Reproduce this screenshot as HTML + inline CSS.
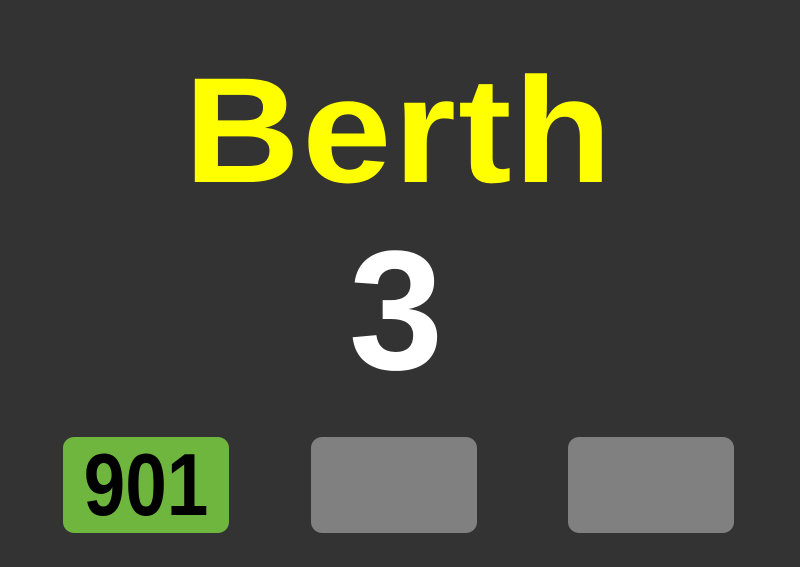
<!DOCTYPE html>
<html><head><style>
body{margin:0;width:800px;height:567px;background:#333;overflow:hidden;position:relative;font-family:"Liberation Sans",sans-serif}
.t{position:absolute;left:0;width:800px;text-align:center;font-weight:bold}
.b{position:absolute;top:437px;width:166px;height:96px;border-radius:11px;background:#808080}
</style></head><body>
<div class="t" style="top:55px;font-size:150px;line-height:150px;color:#ffff00;letter-spacing:2px;transform:scaleX(1.07);left:-1px">Berth</div>
<div class="t" style="top:226px;font-size:170px;line-height:170px;color:#fff;left:-4px">3</div>
<div class="b" style="left:63px;background:#6fb63e"><div style="position:absolute;left:0;width:166px;top:4px;text-align:center;font-weight:bold;font-size:88px;line-height:88px;color:#000;transform:scaleX(0.85)">901</div></div>
<div class="b" style="left:311px"></div>
<div class="b" style="left:568px"></div>
</body></html>
